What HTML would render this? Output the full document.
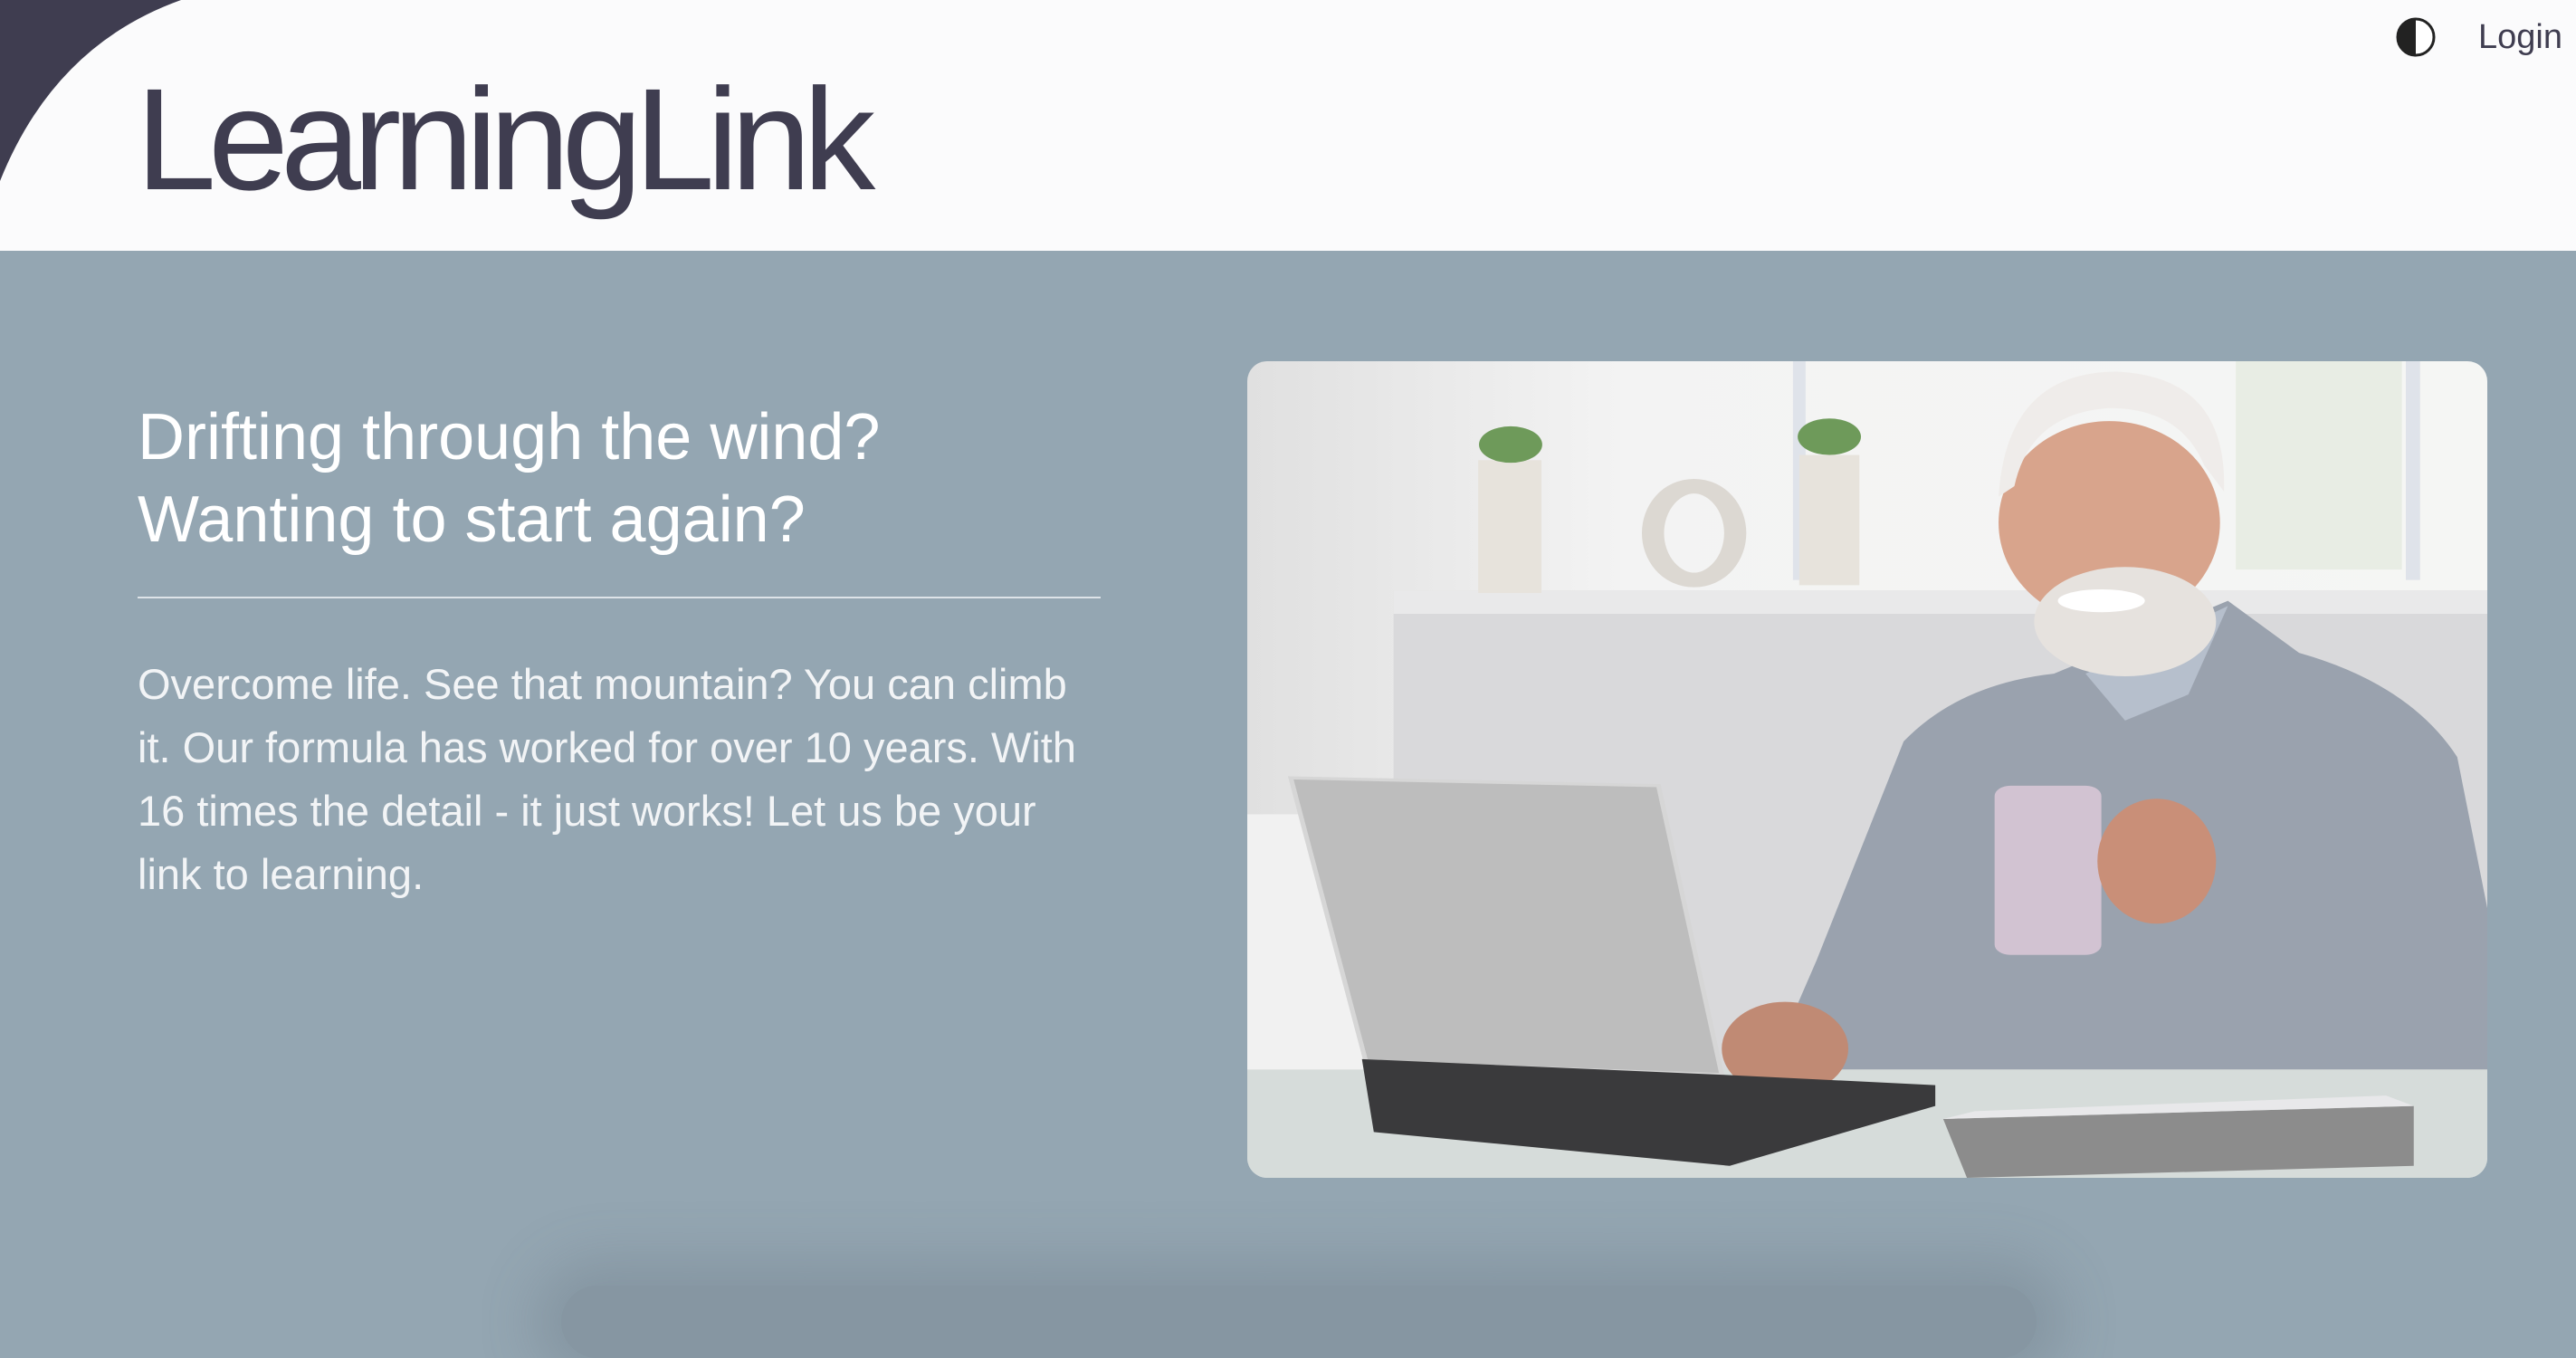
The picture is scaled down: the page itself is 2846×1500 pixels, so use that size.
<!DOCTYPE html>
<html><head><meta charset="utf-8"><style>
html,body{margin:0;padding:0;}
body{width:2846px;height:1412px;overflow:hidden;position:relative;font-family:"Liberation Sans",sans-serif;background:#94a6b2;}
header{position:absolute;left:0;top:0;width:2846px;height:277px;background:#fbfbfc;overflow:hidden;}
.logo{position:absolute;left:150px;top:74px;font-size:160px;letter-spacing:-9px;color:#3f3d50;line-height:1;}
.login{position:absolute;left:2738px;top:20px;font-size:38px;color:#3f3d50;}
.hero{position:absolute;left:0;top:277px;width:2846px;height:1135px;background:#94a6b2;}
h1{position:absolute;left:152px;top:438px;margin:0;font-weight:normal;font-size:72px;line-height:91px;color:#fff;}
.rule{position:absolute;left:152px;top:659px;width:1064px;height:2px;background:#dde3e8;}
p{position:absolute;left:152px;top:721px;width:1064px;margin:0;font-size:47px;line-height:70px;color:#f2f4f6;}
.img{position:absolute;left:1378px;top:399px;width:1370px;height:902px;border-radius:22px;overflow:hidden;}
.shadow{position:absolute;left:620px;top:1420px;width:1630px;height:80px;border-radius:40px;box-shadow:0 0 60px 30px rgba(90,105,115,0.25);background:rgba(90,105,115,0.25);}
</style></head><body>
<header>
<svg width="220" height="200" style="position:absolute;left:0;top:0"><path d="M0 0 L200 0 Q60 50 0 200 Z" fill="#3f3d50"/></svg>
<div class="logo">LearningLink</div>
<svg width="46" height="46" style="position:absolute;left:2646px;top:18px" viewBox="0 0 46 46"><circle cx="23" cy="23" r="20" fill="#fff" stroke="#222" stroke-width="3"/><path d="M23 3 A20 20 0 0 0 23 43 Z" fill="#222"/></svg>
<div class="login">Login</div>
</header>
<div class="hero"></div>
<div class="shadow"></div>
<h1>Drifting through the wind?<br>Wanting to start again?</h1>
<div class="rule"></div>
<p>Overcome life. See that mountain? You can climb it. Our formula has worked for over 10 years. With 16 times the detail - it just works! Let us be your link to learning.</p>
<div class="img">
<svg width="1370" height="902" viewBox="0 0 1568 1568" preserveAspectRatio="none">
<defs><linearGradient id="bg" x1="0" x2="1"><stop offset="0" stop-color="#e0e0e0"/><stop offset="0.3" stop-color="#f3f3f3"/><stop offset="1" stop-color="#f5f6f4"/></linearGradient></defs>
<rect width="1568" height="1568" fill="url(#bg)"/>
<rect x="690" y="0" width="16" height="420" fill="#dfe3ea"/>
<rect x="1465" y="0" width="18" height="420" fill="#dfe3ea"/>
<rect x="1250" y="0" width="210" height="400" fill="#e8ede4"/>
<rect x="185" y="440" width="1383" height="930" fill="#d9d9db"/>
<rect x="185" y="440" width="1383" height="45" fill="#e9e9ea"/>
<rect x="0" y="870" width="185" height="500" fill="#f1f1f1"/>
<rect x="292" y="190" width="80" height="255" fill="#e7e3dc"/>
<ellipse cx="333" cy="160" rx="40" ry="35" fill="#6e9a5a"/>
<rect x="698" y="180" width="76" height="250" fill="#e7e3dc"/>
<ellipse cx="736" cy="145" rx="40" ry="35" fill="#6e9a5a"/>
<ellipse cx="565" cy="330" rx="52" ry="90" fill="none" stroke="#dcd8d2" stroke-width="28"/>
<path d="M660 1360 L720 1150 L830 730 Q900 620 1020 600 L1240 460 L1330 560 Q1470 620 1530 760 L1568 1050 L1568 1360 Z" fill="#9aa2ae"/>
<path d="M1060 600 L1240 470 L1190 640 L1110 690 Z" fill="#b6bfcc"/>
<ellipse cx="1090" cy="310" rx="140" ry="195" fill="#d8a48c"/>
<path d="M950 260 Q960 20 1100 20 Q1240 30 1235 250 L1210 200 Q1180 90 1090 90 Q990 100 970 240 Z" fill="#efecea"/>
<ellipse cx="1110" cy="500" rx="115" ry="105" fill="#e6e2de"/>
<ellipse cx="1080" cy="460" rx="55" ry="22" fill="#fff"/>
<rect x="945" y="815" width="135" height="325" rx="20" fill="#d2c3d2"/>
<ellipse cx="1150" cy="960" rx="75" ry="120" fill="#c98f78"/>
<rect x="0" y="1360" width="1568" height="208" fill="#d6dcda"/>
<polygon points="55,800 520,815 600,1370 150,1345" fill="#bdbdbd" stroke="#d6d6d6" stroke-width="6"/>
<ellipse cx="680" cy="1320" rx="80" ry="90" fill="#c08a74"/>
<polygon points="145,1340 600,1370 870,1390 870,1430 610,1545 160,1480" fill="#3a3a3c"/>
<polygon points="880,1455 1475,1430 1475,1545 910,1568" fill="#8c8c8c"/>
<polygon points="920,1440 1440,1410 1475,1430 880,1455" fill="#e8e8ea"/>
</svg>
</div>
</body></html>
